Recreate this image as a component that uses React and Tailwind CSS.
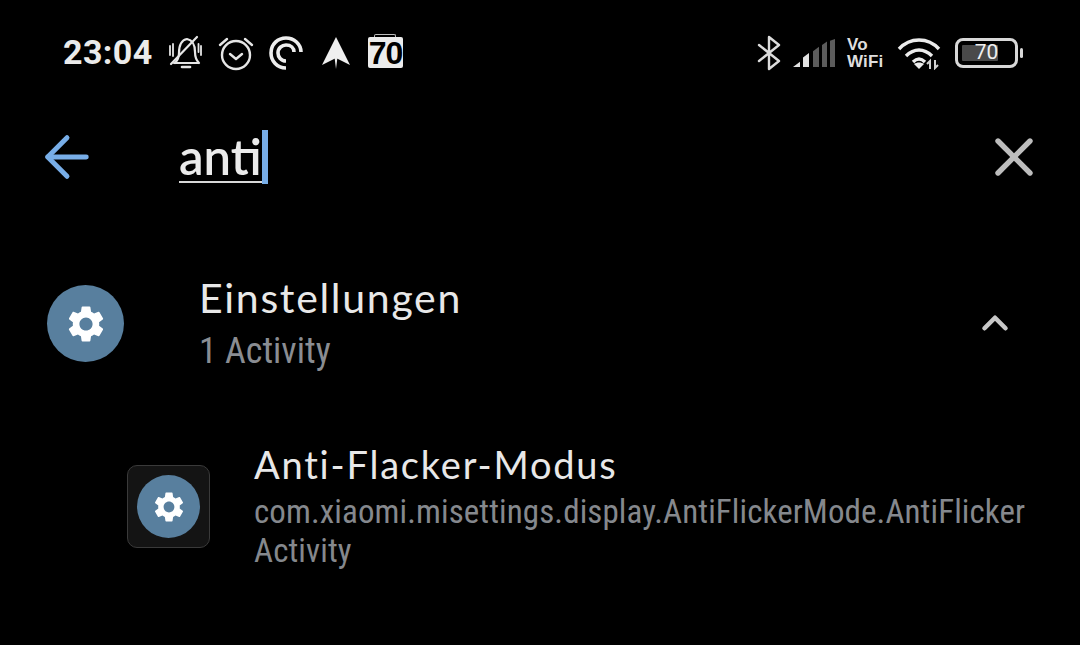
import { MdSettings } from "react-icons/md";
import { LuArrowLeft, LuX, LuChevronUp } from "react-icons/lu";

function MutedBell() {
  return (
    <svg width="36" height="36" viewBox="0 0 36 36" fill="none" stroke="#e6e6e6" strokeWidth="2.2" strokeLinecap="round" strokeLinejoin="round">
      <path d="M6 28h25M7 28c2-2 4-4 4-10 0-8 3-13 8-14 5 1 8 6 8 13 0 6 2 9 4 11" />
      <path d="M14 32h8" strokeWidth="2.6" />
      <path d="M3 29L29 2" />
      <path d="M2 11v9M5 9v12M33 11v9M30.500 9v8" strokeWidth="1.8" />
    </svg>
  );
}

function AlarmClock() {
  return (
    <svg width="36" height="38" viewBox="0 0 36 38" fill="none" stroke="#e6e6e6" strokeLinecap="round" strokeLinejoin="round">
      <circle cx="18" cy="21" r="14" strokeWidth="2.4" />
      <path d="M12 20l6 5 6-5" strokeWidth="2.4" />
      <path d="M2 11l7-6M34 11l-7-6" strokeWidth="2.4" />
    </svg>
  );
}

function PocketCasts() {
  return (
    <svg width="36" height="36" viewBox="0 0 36 36" fill="none" stroke="#ededed" strokeWidth="3.6">
      <path d="M18 33C9 33 3 26 3 18 3 9 10 3 18 3c8 0 15 6 15 14" />
      <path d="M18 26c-5 0-8-4-8-8 0-5 4-8 8-8 5 0 8 3 8 7" />
    </svg>
  );
}

function NavArrow() {
  return (
    <svg width="30" height="34" viewBox="0 0 30 34" fill="#efefef">
      <path d="M15 1L29 29 15 22 1 29z" />
      <path d="M13.500 21h3L15 33z" />
    </svg>
  );
}

function CalendarBadge() {
  return (
    <div className="relative flex h-[31px] w-[35px] items-center justify-center rounded-[2px] bg-[#ececec]">
      <div className="absolute top-[-3px] left-[6px] h-[3px] w-[22px] rounded-t-[2px] border-x border-t border-[#bdbdbd]" />
      <span className="font-['Liberation_Sans',sans-serif] text-[32px] leading-none font-bold tracking-[-1px] text-black">70</span>
    </div>
  );
}

function Bluetooth() {
  return (
    <svg width="24" height="36" viewBox="0 0 24 36" fill="none" stroke="#dcdcdc" strokeWidth="2.4" strokeLinejoin="round" strokeLinecap="round">
      <path d="M2 10l20 16-10 8V2l10 8L2 26" />
    </svg>
  );
}

function Signal() {
  return (
    <svg width="42" height="30" viewBox="0 0 42 34" preserveAspectRatio="none">
      <path d="M0 33h7v-6z" fill="#e2e2e2" />
      <path d="M10 33V22l6-5v16z" fill="#e2e2e2" />
      <path d="M20 33V15l6-5v23z" fill="#5c5c5c" />
      <path d="M29 33V8l5-4v29z" fill="#5c5c5c" />
      <path d="M37 33V3l5-2v32z" fill="#5c5c5c" />
    </svg>
  );
}

function Wifi() {
  return (
    <svg width="44" height="34" viewBox="0 0 44 34" fill="none" stroke="#ececec" strokeWidth="3.4">
      <path d="M2 13C13 1 31 1 42 13" />
      <path d="M9 20c8-8 18-8 26 0" />
      <path d="M16 26c4-4 8-4 12 0" />
      <path d="M22 33l-5-5c3-2 7-2 10 0z" fill="#ececec" stroke="none" />
      <path d="M33 33v-8l-3 3M38 24v8l3-3" stroke="#d0d0d0" strokeWidth="2" />
    </svg>
  );
}

function Battery() {
  return (
    <div className="flex items-center gap-[2px]">
      <div className="relative flex h-[30px] w-[63px] items-center justify-center rounded-[8px] border-[3px] border-[#d8d8d8] p-[2px]">
        <div className="absolute top-[4px] bottom-[4px] left-[4px] w-[36px] rounded-[1px] bg-[#4a4a4a]" />
        <span className="relative font-['Roboto',sans-serif] text-[21px] leading-none text-[#f0f0f0]">70</span>
      </div>
      <div className="h-[10px] w-[3px] rounded-full bg-[#d8d8d8]" />
    </div>
  );
}

function AppIcon({ size, gear }) {
  return (
    <div className="flex shrink-0 items-center justify-center rounded-full bg-[#587f9e]" style={{ width: size, height: size }}>
      <MdSettings color="#ffffff" size={gear} />
    </div>
  );
}

export default function App() {
  return (
    <div className="flex h-[645px] w-[1080px] flex-col overflow-hidden bg-black font-['Roboto',sans-serif] text-[#e8e8e8]">
      {/* status bar */}
      <div className="flex h-[105px] items-center justify-between pr-[57px] pl-[63px]">
        <div className="flex items-center">
          <span className="w-[103px] font-['Roboto',sans-serif] text-[34px] font-bold tracking-[0.4px] text-[#ebebeb]">23:04</span>
          <div className="ml-[2px] flex w-[240px] items-center">
            <MutedBell />
            <div className="ml-[14px]"><AlarmClock /></div>
            <div className="ml-[14px]"><PocketCasts /></div>
            <div className="ml-[17px]"><NavArrow /></div>
            <div className="ml-[17px]"><CalendarBadge /></div>
          </div>
        </div>
        <div className="flex items-center gap-[12px]">
          <Bluetooth />
          <Signal />
          <div className="flex w-[38px] flex-col items-start font-['Liberation_Sans',sans-serif] text-[17px] leading-[17px] font-bold tracking-[0.2px] text-[#dedede]">
            <span>Vo</span>
            <span>WiFi</span>
          </div>
          <Wifi />
          <div className="ml-[2px]">
            <Battery />
          </div>
        </div>
      </div>

      {/* search bar */}
      <div className="flex h-[104px] items-center pr-[34px] pl-[34px]">
        <LuArrowLeft size={66} strokeWidth={1.8} color="#78aee8" className="shrink-0" />
        <div className="ml-[79px] flex flex-1 items-center">
          <span className="border-b-2 border-[#d8d8d8] font-['Lato',sans-serif] text-[49px] leading-[50px] font-semibold text-[#ebebeb]">anti</span>
          <span className="h-[54px] w-[6px] bg-[#78aee8]" />
        </div>
        <LuX size={64} strokeWidth={2} color="#bdbdbd" className="shrink-0" />
      </div>

      {/* app row */}
      <div className="mt-[66px] flex items-center pr-[64px] pl-[47px]">
        <AppIcon size={77} gear={44} />
        <div className="ml-[75px] flex-1">
          <div className="mt-[-3px] font-['Lato',sans-serif] text-[41px] leading-[52px] tracking-[1.7px] text-[#e8e8e8]">Einstellungen</div>
          <div className="mt-[6px] font-['Roboto',sans-serif] text-[36px] leading-[42px] font-stretch-condensed text-[#8a8d92]">1 Activity</div>
        </div>
        <LuChevronUp size={42} strokeWidth={2.6} color="#c8c8c8" className="mt-[-2px]" />
      </div>

      {/* activity row */}
      <div className="mt-[66px] flex items-start pr-[50px] pl-[127px]">
        <div className="mt-[27px] flex h-[83px] w-[83px] shrink-0 items-center justify-center rounded-[10px] border border-[#3a3a3a] bg-[#141414]">
          <AppIcon size={63} gear={36} />
        </div>
        <div className="ml-[44px] flex-1">
          <div className="mt-[2px] font-['Lato',sans-serif] text-[38px] leading-[48px] tracking-[1.8px] text-[#e8e8e8]">Anti-Flacker-Modus</div>
          <div className="mt-[4px] font-['Roboto',sans-serif] text-[33px] leading-[39px] tracking-[0.1px] font-stretch-condensed text-[#85888d]">
            com.xiaomi.misettings.display.AntiFlickerMode.AntiFlicker
            <br />
            Activity
          </div>
        </div>
      </div>
    </div>
  );
}
